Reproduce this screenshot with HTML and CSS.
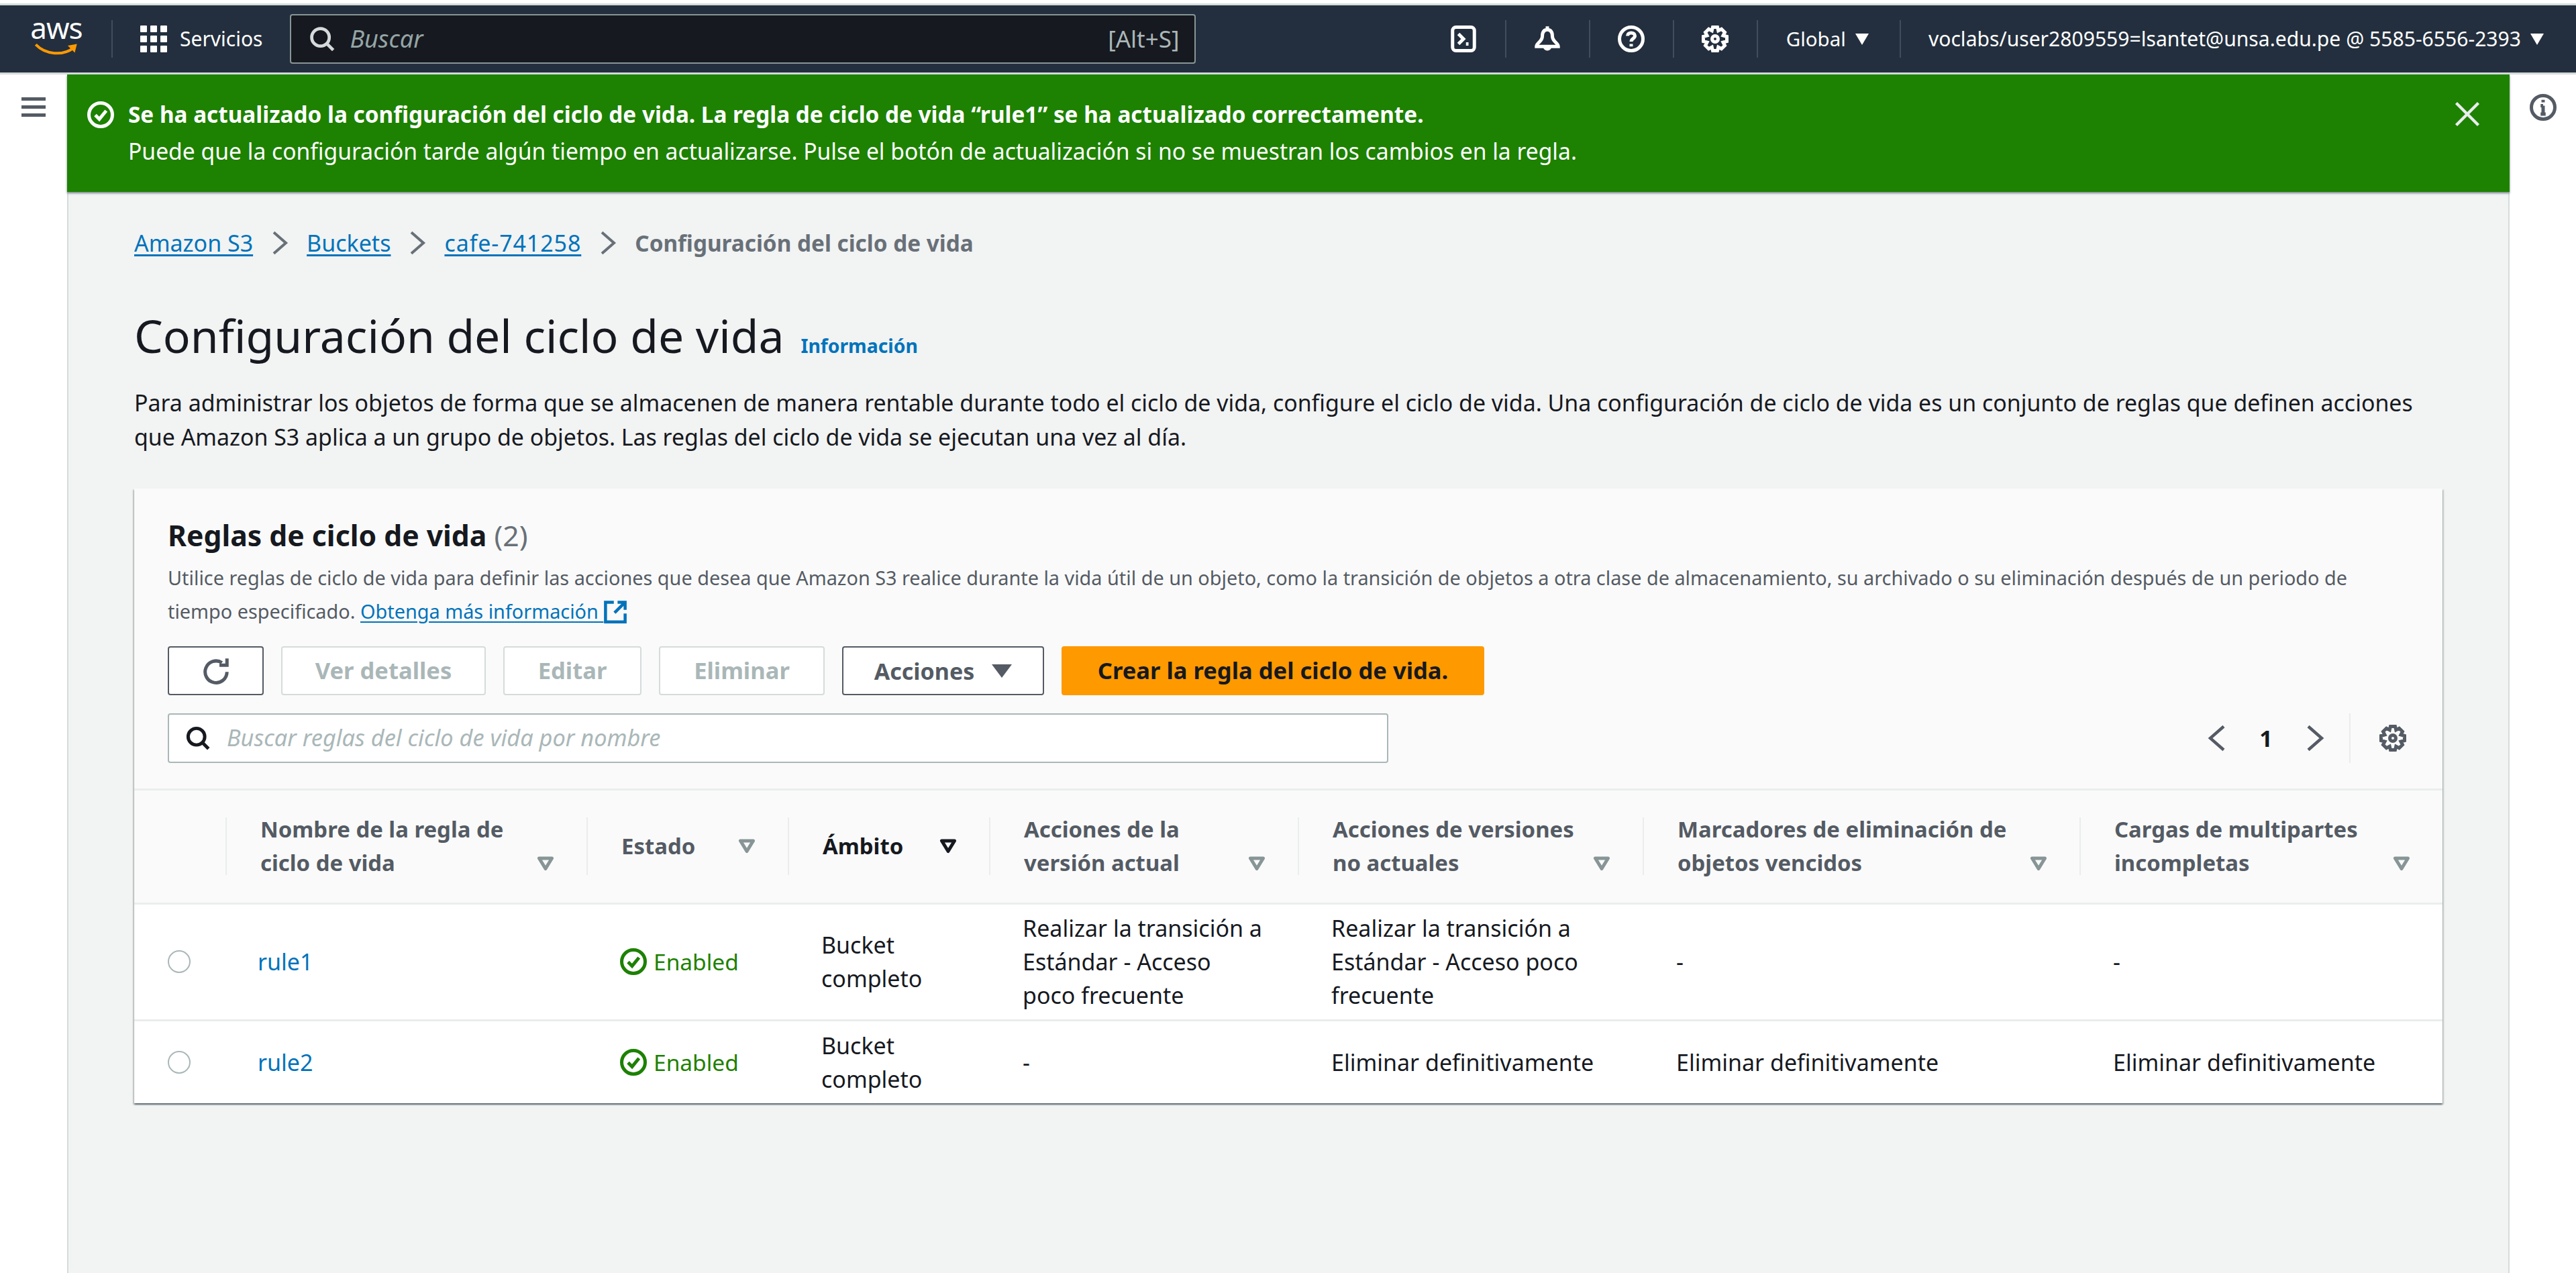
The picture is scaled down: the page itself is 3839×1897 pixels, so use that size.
FILE: index.html
```html
<!DOCTYPE html>
<html lang="es">
<head>
<meta charset="utf-8">
<title>Configuración del ciclo de vida</title>
<link rel="stylesheet" href="styles.css">
</head>
<body>
<svg class="sprite" aria-hidden="true">
  <symbol id="i-search" viewBox="0 0 16 16"><circle cx="7" cy="7" r="5.5"/><path d="M10.9 10.9 15 15"/></symbol>
  <symbol id="i-gear" viewBox="0 0 16 16"><circle cx="8" cy="8" r="1.8"/><path d="M6.6 1h2.8l.5 2.1 1.9-1 2 2-1 1.9 2.2.6v2.8l-2.2.6 1 1.9-2 2-1.9-1-.5 2.1H6.6l-.5-2.1-1.9 1-2-2 1-1.9L1 9.4V6.6l2.2-.6-1-1.9 2-2 1.9 1z"/></symbol>
  <symbol id="i-check" viewBox="0 0 16 16"><circle cx="8" cy="8" r="7"/><path d="M4.8 8.2 7.2 10.6 11.3 5.6"/></symbol>
  <symbol id="i-sort" viewBox="0 0 26 22"><path d="M3.500 3h19L13 18.500z"/></symbol>
  <symbol id="i-chev-r" viewBox="0 0 16 16"><path d="M4 1l8 7-8 7"/></symbol>
  <symbol id="i-chev-l" viewBox="0 0 16 16"><path d="M12 1 4 8l8 7"/></symbol>
</svg>

<div class="top-strip"></div>
<header class="nav">
  <div class="logo">
    <span class="logo-text">aws</span>
    <svg class="logo-smile" viewBox="0 0 80 26"><path d="M2 3C20 22 52 24 72 9" fill="none" stroke="#f90" stroke-width="5"/><path d="M61 5 78 2 74 18z" fill="#f90"/></svg>
  </div>
  <span class="nav-sep logo-sep"></span>
  <div class="services">
    <svg class="grid-icon" viewBox="0 0 40 40"><g fill="#fff"><rect x="0" width="10" height="10" rx="1"/><rect x="15" width="10" height="10" rx="1"/><rect x="30" width="10" height="10" rx="1"/><rect x="0" y="15" width="10" height="10" rx="1"/><rect x="15" y="15" width="10" height="10" rx="1"/><rect x="30" y="15" width="10" height="10" rx="1"/><rect x="0" y="30" width="10" height="10" rx="1"/><rect x="15" y="30" width="10" height="10" rx="1"/><rect x="30" y="30" width="10" height="10" rx="1"/></g></svg>
    <span class="services-label">Servicios</span>
  </div>
  <div class="nav-search">
    <svg class="ico ico-white nav-search-icon"><use href="#i-search"/></svg>
    <span class="nav-search-text">Buscar</span>
    <span class="nav-search-key">[Alt+S]</span>
  </div>
  <div class="nav-right">
    <span class="nav-item">
      <svg class="ico ico-white" viewBox="0 0 16 16"><rect x="1.500" y="1" width="13" height="14" rx="2"/><path d="M5 5l3 3-3 3M9.500 11H11"/></svg>
    </span>
    <span class="nav-sep"></span>
    <span class="nav-item">
      <svg class="ico ico-white" viewBox="0 0 16 16"><path d="M8 .5V2.500M8 2.500C5.500 2.500 5 4.500 5 6.500 5 9.500 1.500 10.500 1.500 12.500h13c0-2-3.500-3-3.500-6 0-2-.5-4-3-4z"/><path d="M6.500 12.500a1.500 1.500 0 0 0 3 0"/></svg>
    </span>
    <span class="nav-sep"></span>
    <span class="nav-item">
      <svg class="ico ico-white" viewBox="0 0 16 16"><circle cx="8" cy="8" r="7"/><path d="M5.800 6.200C5.800 3.800 10.200 3.800 10.200 6.200 10.200 7.800 8 7.800 8 9.600M8 11v1.500"/></svg>
    </span>
    <span class="nav-sep"></span>
    <span class="nav-item">
      <svg class="ico ico-white"><use href="#i-gear"/></svg>
    </span>
    <span class="nav-sep"></span>
    <span class="nav-text nav-global">Global<span class="caret"></span></span>
    <span class="nav-sep"></span>
    <span class="nav-text nav-user">voclabs/user2809559=lsantet@unsa.edu.pe @ 5585-6556-2393<span class="caret"></span></span>
  </div>
</header>
<div class="nav-line"></div>

<div class="shell">
  <aside class="side side-left">
    <span class="burger"><i></i><i></i><i></i></span>
  </aside>

  <main class="content">
    <section class="flash">
      <svg class="ico ico-white flash-icon"><use href="#i-check"/></svg>
      <div class="flash-body">
        <p class="flash-title">Se ha actualizado la configuración del ciclo de vida. La regla de ciclo de vida “rule1” se ha actualizado correctamente.</p>
        <p class="flash-text">Puede que la configuración tarde algún tiempo en actualizarse. Pulse el botón de actualización si no se muestran los cambios en la regla.</p>
      </div>
      <svg class="ico flash-close" viewBox="0 0 16 16"><path d="M2 2l12 12M14 2 2 14"/></svg>
    </section>

    <div class="page">
      <nav class="crumbs">
        <a class="link" href="#">Amazon S3</a>
        <svg class="ico ico-grey crumb-sep"><use href="#i-chev-r"/></svg>
        <a class="link" href="#">Buckets</a>
        <svg class="ico ico-grey crumb-sep"><use href="#i-chev-r"/></svg>
        <a class="link crumb-id" href="#">cafe-741258</a>
        <svg class="ico ico-grey crumb-sep"><use href="#i-chev-r"/></svg>
        <span class="crumb-current">Configuración del ciclo de vida</span>
      </nav>

      <div class="title-row">
        <h1 class="title">Configuración del ciclo de vida</h1>
        <a class="info-link" href="#">Información</a>
      </div>
      <p class="intro">Para administrar los objetos de forma que se almacenen de manera rentable durante todo el ciclo de vida, configure el ciclo de vida. Una configuración de ciclo de vida es un conjunto de reglas que definen acciones<br>que Amazon S3 aplica a un grupo de objetos. Las reglas del ciclo de vida se ejecutan una vez al día.</p>

      <section class="card">
        <div class="card-head">
          <h2 class="card-title">Reglas de ciclo de vida <span class="count">(2)</span></h2>
          <p class="card-desc">Utilice reglas de ciclo de vida para definir las acciones que desea que Amazon S3 realice durante la vida útil de un objeto, como la transición de objetos a otra clase de almacenamiento, su archivado o su eliminación después de un periodo de<br>tiempo especificado. <a class="link" href="#">Obtenga más información <svg class="ext" viewBox="0 0 16 16"><path d="M7 1.500H1.500v13h13V9M9.500 1.500h5v5M14.500 1.500 7.500 8.500"/></svg></a></p>
          <div class="toolbar">
            <button class="btn btn-icon"><svg class="ico ico-grey" viewBox="0 0 16 16"><path d="M14.500 8.500a6.500 6.500 0 1 1-3-5.500"/><path d="M14.500 .5V4.500H10"/></svg></button>
            <button class="btn btn-off btn-details">Ver detalles</button>
            <button class="btn btn-off btn-edit">Editar</button>
            <button class="btn btn-off btn-delete">Eliminar</button>
            <button class="btn btn-actions">Acciones<span class="caret caret-dark"></span></button>
            <button class="btn btn-primary">Crear la regla del ciclo de vida.</button>
          </div>
          <div class="filter-row">
            <div class="filter">
              <svg class="ico ico-dark filter-icon"><use href="#i-search"/></svg>
              <span class="filter-text">Buscar reglas del ciclo de vida por nombre</span>
            </div>
            <div class="pager">
              <svg class="ico ico-grey pager-arrow"><use href="#i-chev-l"/></svg>
              <span class="pager-num">1</span>
              <svg class="ico ico-grey pager-arrow"><use href="#i-chev-r"/></svg>
              <span class="pager-sep"></span>
              <svg class="ico ico-grey"><use href="#i-gear"/></svg>
            </div>
          </div>
        </div>

        <table class="rules">
          <colgroup>
            <col class="c0"><col class="c1"><col class="c2"><col class="c3"><col class="c4"><col class="c5"><col class="c6"><col class="c7">
          </colgroup>
          <thead>
            <tr>
              <th></th>
              <th><div class="th-in"><span>Nombre de la regla de<br>ciclo de vida</span><svg class="sort"><use href="#i-sort"/></svg></div></th>
              <th><div class="th-in th-mid"><span>Estado</span><svg class="sort"><use href="#i-sort"/></svg></div></th>
              <th><div class="th-in th-mid th-active"><span>Ámbito</span><svg class="sort"><use href="#i-sort"/></svg></div></th>
              <th><div class="th-in"><span>Acciones de la<br>versión actual</span><svg class="sort"><use href="#i-sort"/></svg></div></th>
              <th><div class="th-in"><span>Acciones de versiones<br>no actuales</span><svg class="sort"><use href="#i-sort"/></svg></div></th>
              <th><div class="th-in"><span>Marcadores de eliminación de<br>objetos vencidos</span><svg class="sort"><use href="#i-sort"/></svg></div></th>
              <th><div class="th-in"><span>Cargas de multipartes<br>incompletas</span><svg class="sort"><use href="#i-sort"/></svg></div></th>
            </tr>
          </thead>
          <tbody>
            <tr class="row-a">
              <td><span class="radio"></span></td>
              <td><a class="rule-link" href="#">rule1</a></td>
              <td><span class="status"><svg class="ico ico-green"><use href="#i-check"/></svg>Enabled</span></td>
              <td>Bucket<br>completo</td>
              <td>Realizar la transición a<br>Estándar - Acceso<br>poco frecuente</td>
              <td>Realizar la transición a<br>Estándar - Acceso poco<br>frecuente</td>
              <td>-</td>
              <td>-</td>
            </tr>
            <tr class="row-b">
              <td><span class="radio"></span></td>
              <td><a class="rule-link" href="#">rule2</a></td>
              <td><span class="status"><svg class="ico ico-green"><use href="#i-check"/></svg>Enabled</span></td>
              <td>Bucket<br>completo</td>
              <td>-</td>
              <td>Eliminar definitivamente</td>
              <td>Eliminar definitivamente</td>
              <td>Eliminar definitivamente</td>
            </tr>
          </tbody>
        </table>
      </section>
    </div>
  </main>

  <aside class="side side-right">
    <svg class="ico ico-grey info-icon" viewBox="0 0 16 16"><circle cx="8" cy="8" r="7"/><path d="M8 7v5M6.500 12h3M6.500 7H8M8 3.500v1.500"/></svg>
  </aside>
</div>
</body>
</html>
```

FILE: styles.css
```css
* { box-sizing: border-box; }
html, body { margin: 0; padding: 0; height: 1897px; overflow: hidden; background: #fff; }
body { font-family: "Noto Sans", "Open Sans", sans-serif; font-size: 34px; line-height: 50px; color: #16191f; }
p, h1, h2 { margin: 0; }
.sprite { display: none; }

.ico { width: 40px; height: 40px; fill: none; stroke-width: 2; flex: none; display: block; }
.ico-white { stroke: #fff; }
.ico-grey { stroke: #545b64; }
.ico-dark { stroke: #16191f; }
.ico-green { stroke: #1d8102; }

.top-strip { height: 8px; border-top: 5px solid #fff; background: #d5dbdb; }
.nav { height: 100px; background: #232f3e; display: flex; align-items: center; color: #fff; padding-left: 45px; }
.nav-line { height: 3px; background: #d5dbdb; }
.logo { width: 78px; height: 62px; position: relative; flex: none; }
.logo-text { display: block; font-size: 44px; line-height: 44px; letter-spacing: -1px; margin-top: -8px; text-align: center; color: #fff; }
.logo-smile { position: absolute; left: 0; top: 37px; width: 78px; height: 21px; }
.nav-sep { width: 2px; height: 56px; background: #414d5c; flex: none; }
.logo-sep { margin-left: 43px; }
.services { display: flex; align-items: center; margin-left: 41px; }
.grid-icon { width: 40px; height: 40px; display: block; }
.services-label { margin-left: 19px; font-size: 30px; }
.nav-search { margin-left: 41px; width: 1350px; height: 74px; background: #16191f; border: 2px solid #879596; border-radius: 4px; display: flex; align-items: center; padding: 0 23px 0 27px; }
.nav-search-icon { width: 38px; height: 38px; stroke: #d5dbdb; }
.nav-search-text { margin-left: 22px; font-style: italic; color: #95a5a6; font-size: 36px; flex: 1; }
.nav-search-key { color: #aab7b8; font-size: 35px; }
.nav-right { margin-left: auto; padding-right: 48px; display: flex; align-items: center; }
.nav-item { width: 123px; display: flex; justify-content: center; }
.nav-text { font-size: 30px; white-space: nowrap; display: flex; align-items: center; }
.nav-global { padding: 0 46px 0 42px; font-size: 29.500px; }
.nav-user { padding-left: 41px; font-size: 30.100px; }
.caret { display: inline-block; width: 0; height: 0; border-left: 10px solid transparent; border-right: 10px solid transparent; border-top: 17px solid #fff; margin-left: 14px; }
.caret-dark { border-left-width: 15px; border-right-width: 15px; border-top: 20px solid #545b64; margin-left: 26px; }

.shell { display: flex; height: 1786px; }
.side { width: 100px; flex: none; background: #fff; }
.side-right { width: 99px; padding: 29px 0 0 30px; }
.side-left { padding: 34px 0 0 32px; }
.burger { display: flex; flex-direction: column; gap: 7px; width: 36px; }
.burger i { display: block; height: 5px; background: #545b64; }
.content { flex: 1; min-width: 0; background: #f2f3f3; border-left: 2px solid #d5dbdb; border-right: 2px solid #d5dbdb; }

.flash { margin: 0 -2px; height: 175px; background: #1d8102; color: #fff; display: flex; align-items: flex-start; padding: 34px 41px 0 30px; box-shadow: 0 2px 3px rgba(0, 28, 36, .5); position: relative; }
.flash-icon { margin-top: 6px; }
.flash-body { flex: 1; margin-left: 21px; }
.flash-title { font-weight: 700; font-size: 33.300px; line-height: 50px; }
.flash-text { font-size: 33.650px; line-height: 50px; margin-top: 5px; }
.flash-close { width: 44px; height: 44px; stroke: #eaeded; stroke-width: 1.600; margin-top: 3px; }

.page { padding: 51px 98px 0; }
.link { color: #0073bb; text-decoration: underline; text-underline-offset: 4px; }
.crumbs { display: flex; align-items: center; height: 50px; }
.crumb-id { letter-spacing: .9px; }
.crumb-sep { width: 36px; height: 36px; stroke: #687078; stroke-width: 1.800; margin: 0 22px; }
.crumb-current { font-weight: 700; font-size: 33.300px; color: #687078; }

.title-row { display: flex; align-items: baseline; margin-top: 73px; height: 80px; }
.title { font-size: 67.800px; line-height: 80px; font-weight: 400; }
.info-link { margin-left: 25px; font-size: 28.300px; font-weight: 700; color: #0073bb; text-decoration: none; }
.intro { margin-top: 35px; font-size: 33.900px; line-height: 50.500px; }

.card { margin-top: 52px; background: #fff; box-shadow: 0 2px 2px rgba(0, 28, 36, .5), 2px 2px 2px rgba(0, 28, 36, .15), -2px 2px 2px rgba(0, 28, 36, .15); }
.card-head { background: #fafafa; padding: 40px 51px 38px 50px; border-bottom: 3px solid #eaeded; }
.card-title { font-size: 42.700px; line-height: 60px; font-weight: 700; }
.count { font-weight: 400; color: #687078; }
.card-desc { margin-top: 8px; font-size: 28.850px; color: #545b64; line-height: 50px; white-space: nowrap; }
.ext { display: inline-block; width: 36px; height: 36px; fill: none; stroke: #0073bb; stroke-width: 2; vertical-align: -8px; }

.toolbar { display: flex; gap: 26px; margin-top: 27px; }
.btn { height: 73px; font: 700 34.600px/1 "Noto Sans", "Open Sans", sans-serif; border-radius: 4px; background: #fff; border: 2px solid #545b64; color: #545b64; padding: 0; display: flex; align-items: center; justify-content: center; }
.btn-icon { width: 143px; }
.btn-off { border-color: #d5dbdb; color: #aab7b8; }
.btn-details { width: 305px; }
.btn-edit { width: 206px; }
.btn-delete { width: 247px; }
.btn-actions { width: 301px; font-size: 34px; }
.btn-primary { width: 630px; background: #ff9900; border-color: #ff9900; color: #16191f; }

.filter-row { display: flex; align-items: center; justify-content: space-between; margin-top: 27px; }
.filter { width: 1819px; height: 74px; background: #fff; border: 2px solid #aab7b8; border-radius: 4px; display: flex; align-items: center; padding-left: 25px; }
.filter-icon { width: 36px; height: 36px; stroke-width: 2.200; }
.filter-text { margin-left: 25px; font-style: italic; color: #aab7b8; font-size: 34.300px; line-height: 46px; padding-bottom: 2px; }
.pager { display: flex; align-items: center; padding-right: 3px; }
.pager-arrow { width: 40px; height: 40px; stroke-width: 1.800; }
.pager-num { width: 106px; text-align: center; font-size: 34px; font-weight: 700; }
.pager-sep { width: 2px; height: 74px; background: #eaeded; margin: 0 43px 0 31px; }

.rules { width: 100%; table-layout: fixed; border-collapse: collapse; }
.c0 { width: 136px; } .c1 { width: 538px; } .c2 { width: 300px; } .c3 { width: 300px; }
.c4 { width: 460px; } .c5 { width: 514px; } .c6 { width: 651px; } .c7 { width: 541px; }
.rules thead { background: #fafafa; }
.rules th { height: 168px; padding: 0; border-bottom: 3px solid #eaeded; font-size: 32.900px; font-weight: 700; color: #545b64; text-align: left; vertical-align: middle; }
.th-in { height: 86px; padding: 0 48px 0 50px; border-left: 2px solid #eaeded; display: flex; justify-content: space-between; align-items: center; }
.sort { width: 26px; height: 22px; fill: none; stroke: #879596; stroke-width: 5; stroke-linejoin: round; flex: none; align-self: flex-end; margin-bottom: 6px; }
.th-mid .sort { align-self: center; margin-bottom: 0; }
.th-active { color: #16191f; }
.th-active .sort { stroke: #16191f; }
.rules td { padding: 0 0 0 50px; vertical-align: middle; }
.row-a td { height: 174px; border-bottom: 3px solid #eaeded; }
.row-b td { height: 124px; }
.rules td:nth-child(2) { padding-left: 48px; }
.radio { display: block; width: 34px; height: 34px; border-radius: 50%; border: 2px solid #aab7b8; background: #fff; }
.rule-link { color: #0073bb; text-decoration: none; }
.status { display: flex; align-items: center; gap: 10px; font-size: 33.500px; color: #1d8102; }
```
